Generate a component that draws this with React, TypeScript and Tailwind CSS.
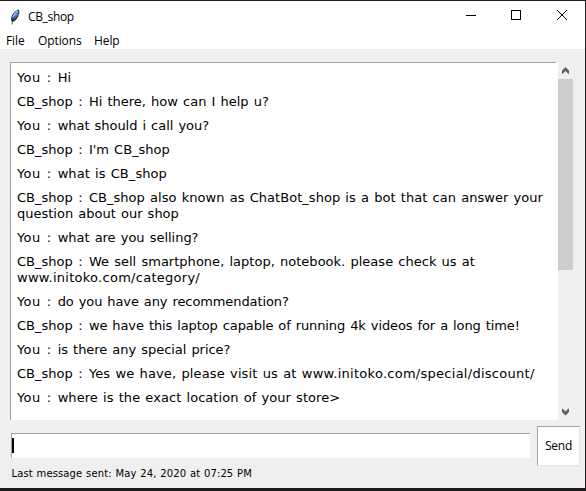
type Line = { text?: string; tracking?: string; link?: string };
type Message = { from: "You" | "CB_shop"; lines: Line[] };

const messages: Message[] = [
  { from: "You", lines: [{ text: "Hi" }] },
  { from: "CB_shop", lines: [{ text: "Hi there, how can I help u?" }] },
  { from: "You", lines: [{ text: "what should i call you?", tracking: "tracking-[-0.04px]" }] },
  { from: "CB_shop", lines: [{ text: "I'm CB_shop" }] },
  { from: "You", lines: [{ text: "what is CB_shop", tracking: "tracking-[0.06px]" }] },
  {
    from: "CB_shop",
    lines: [
      {
        text: "CB_shop also known as ChatBot_shop is a bot that can answer your",
        tracking: "tracking-[0.04px]",
      },
      { text: "question about our shop" },
    ],
  },
  { from: "You", lines: [{ text: "what are you selling?", tracking: "tracking-[-0.02px]" }] },
  {
    from: "CB_shop",
    lines: [
      {
        text: "We sell smartphone, laptop, notebook. please check us at",
        tracking: "tracking-[0.02px]",
      },
      { link: "www.initoko.com/category/" },
    ],
  },
  { from: "You", lines: [{ text: "do you have any recommendation?", tracking: "tracking-[-0.1px]" }] },
  {
    from: "CB_shop",
    lines: [
      {
        text: "we have this laptop capable of running 4k videos for a long time!",
        tracking: "tracking-[-0.1px]",
      },
    ],
  },
  { from: "You", lines: [{ text: "is there any special price?", tracking: "tracking-[-0.04px]" }] },
  {
    from: "CB_shop",
    lines: [
      {
        text: "Yes we have, please visit us at ",
        tracking: "tracking-[0.12px]",
        link: "www.initoko.com/special/discount/",
      },
    ],
  },
  {
    from: "You",
    lines: [{ text: "where is the exact location of your store>", tracking: "tracking-[0.05px]" }],
  },
];

function Feather() {
  return (
    <svg className="ml-[10px] h-4 w-[10px]" viewBox="0 0 10 16">
      <path d="M9 .5C6 1 2.4 4.4 1.3 8L1 11.6 3 13l2.8-2L8 8 9.4 3.6z" fill="#26303c" />
      <path d="M8.3 1.5C5.6 2.6 3.3 5 2.2 8.3l-.1 2L4.2 10l3-3L8.5 3.6z" fill="#4f8ad6" />
      <path d="M7.8 2C5.6 3.2 3.8 5.4 3 8" fill="none" stroke="#a4cdf6" strokeWidth="1.2" />
      <path d="M5 7 2.8 10.5 2 15.5" fill="none" stroke="#202226" strokeWidth=".8" />
    </svg>
  );
}

function TitleBar() {
  return (
    <div className="flex h-[31px] items-center bg-white">
      <Feather />
      <span className="ml-2 flex-1 text-[12px] leading-4 tracking-[-0.35px]">CB_shop</span>
      <svg className="h-[30px] w-[125px] self-start" viewBox="0 0 125 30" shapeRendering="crispEdges">
        <path d="M6 14.5H16" stroke="#000" />
        <rect x="51.5" y="9.5" width="9" height="9" fill="none" stroke="#000" />
        <path d="m97 9 10 10m0-10L97 19" stroke="#000" shapeRendering="auto" />
      </svg>
    </div>
  );
}

function Scrollbar() {
  return (
    <div className="flex w-[15px] flex-col bg-[#f0f0f0]">
      <svg className="h-[17px] w-[15px]" viewBox="0 0 15 17">
        <path d="M4 8.5 7.5 5 11 8.5v3.2h-.8L7.5 9l-2.7 2.7H4z" fill="#606060" />
      </svg>
      <div className="h-[191px] bg-[#cdcdcd]" />
      <div className="flex-1" />
      <svg className="h-[17px] w-[15px]" viewBox="0 0 15 17">
        <path d="M4 9l3.5 3.5L11 9V5.8h-.8L7.5 8.5 4.8 5.8H4z" fill="#606060" />
      </svg>
    </div>
  );
}

function Sender({ name }: { name: Message["from"] }) {
  return (
    <span>
      <span className={name === "You" ? "tracking-[0.4px]" : ""}>{name}</span>
      {" "}
      <span className={name === "You" ? "pr-[1.5px] pl-[0.9px]" : "pr-[1px] pl-[0.5px]"}>:</span>{" "}
    </span>
  );
}

export default function App() {
  return (
    <div className="flex h-[491px] w-[586px] flex-col border-t border-r border-b-[3px] border-[#1f1b1d] bg-[#efefef] font-['Open_Sans',sans-serif] text-black">
      <TitleBar />
      <nav className="flex h-[17px] bg-white pl-[6px] text-[12px] leading-[17px] tracking-[-0.1px]">
        <span className="w-8">File</span>
        <span className="w-14">Options</span>
        <span>Help</span>
      </nav>
      <div className="mt-[13px] ml-[10px] flex h-[358px]">
        <div className="w-[546px] border-t border-l border-[#a0a0a0] bg-white pt-[7px] pl-[6px] font-['DejaVu_Sans',sans-serif] text-[13px] leading-4 [word-spacing:1px]">
          {messages.map((m, i) => (
            <div key={i} className="mb-2">
              {m.lines.map((line, j) => (
                <div key={j} className="whitespace-pre">
                  {j === 0 && <Sender name={m.from} />}
                  {line.text && <span className={line.tracking}>{line.text}</span>}
                  {line.link && <span className="tracking-[0.27px]">{line.link}</span>}
                </div>
              ))}
            </div>
          ))}
        </div>
        <div className="w-[2px] bg-white" />
        <Scrollbar />
      </div>
      <div className="mt-[6px] flex h-[62px] pl-[11px]">
        <div className="w-[519px]">
          <div className="mt-[7px] flex h-[25px] border-t border-l border-[#a0a0a0] bg-white pt-1">
            <div className="h-[15px] w-[2px] bg-black" />
          </div>
          <div className="mt-[8px] pl-[0.5px] font-['DejaVu_Sans',sans-serif] text-[10px] leading-4 tracking-[0.12px] [word-spacing:0.45px]">
            Last message sent: May 24, 2020 at 07:25 PM
          </div>
        </div>
        <button className="ml-[7px] h-10 w-[43px] border border-t-[#a0a0a0] border-r-[#e3e3e3] border-b-[#e3e3e3] border-l-[#a0a0a0] bg-white text-[12px] tracking-[-0.2px]">
          Send
        </button>
      </div>
    </div>
  );
}
